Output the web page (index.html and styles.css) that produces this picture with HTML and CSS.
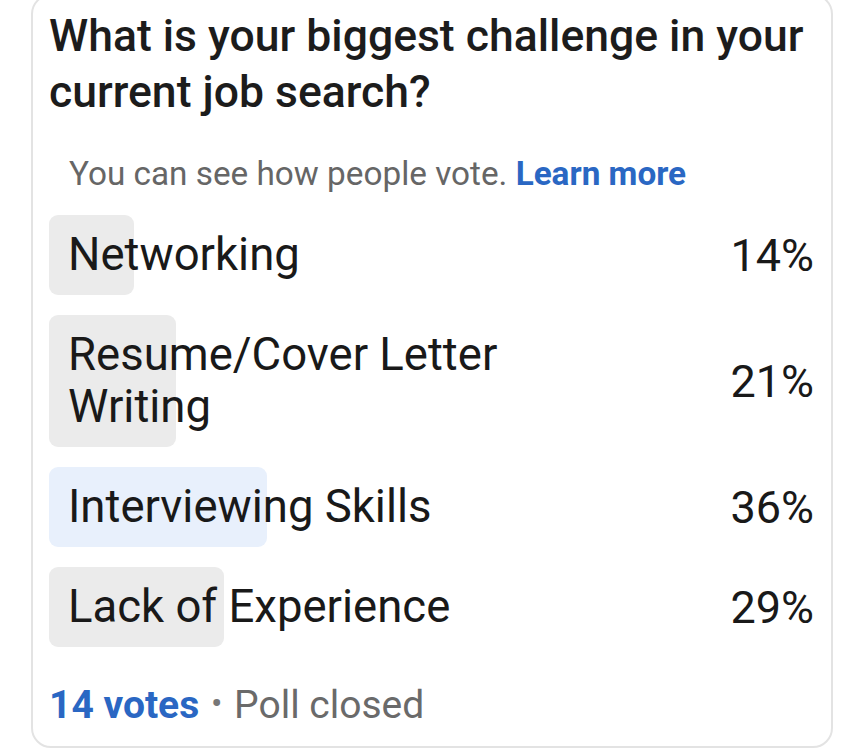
FILE: index.html
```html
<!DOCTYPE html>
<html>
<head>
    <title>Poll</title>
    <link rel="stylesheet" href="styles.css">
</head>
<body>
    <div class="poll-card">
        <h1 class="poll-question">What is your biggest challenge in your current job search?</h1>
        <p class="poll-note">You can see how people vote. <a href="#" class="link">Learn more</a></p>

        <div class="options">
            <div class="option">
                <div class="track"><div class="bar" style="width: 14%;"></div></div>
                <span class="label">Networking</span>
                <span class="pct">14%</span>
            </div>
            <div class="option">
                <div class="track"><div class="bar" style="width: 21%;"></div></div>
                <span class="label">Resume/Cover Letter Writing</span>
                <span class="pct">21%</span>
            </div>
            <div class="option chosen">
                <div class="track"><div class="bar" style="width: 36%;"></div></div>
                <span class="label">Interviewing Skills</span>
                <span class="pct">36%</span>
            </div>
            <div class="option">
                <div class="track"><div class="bar" style="width: 29%;"></div></div>
                <span class="label">Lack of Experience</span>
                <span class="pct">29%</span>
            </div>
        </div>

        <div class="poll-footer">
            <a href="#" class="votes">14 votes</a>
            <span class="dot">&bull;</span>
            <span class="status">Poll closed</span>
        </div>
    </div>
</body>
</html>
```

FILE: styles.css
```css
body {
    margin: 0;
    background: #fff;
    font-family: Roboto, 'Noto Sans', sans-serif;
    color: #191919;
}

.poll-card {
    width: 802px;
    box-sizing: border-box;
    margin: -6px 0 0 31px;
    padding: 12px 17px 17px 16px;
    border: 2px solid #e3e3e3;
    border-radius: 20px;
    background: #fff;
}

.poll-question {
    margin: 0;
    font-size: 44.5px;
    font-weight: 500;
    line-height: 56px;
    color: #1c1c1c;
}

.poll-note {
    margin: 31px 0 18px 20px;
    font-size: 33.3px;
    line-height: 46px;
    color: #666;
}

.link {
    color: #2a67c3;
    font-weight: 700;
    text-decoration: none;
}

.options {
    display: flex;
    flex-direction: column;
    gap: 20px;
}

.option {
    position: relative;
    display: flex;
    align-items: center;
    justify-content: space-between;
    min-height: 80px;
}

.track {
    position: absolute;
    top: 0;
    bottom: 0;
    left: 0;
    width: 605px;
}

.bar {
    height: 100%;
    background: #ebebeb;
    border-radius: 9px;
}

.chosen .bar {
    background: #e8f0fc;
}

.label {
    position: relative;
    width: 563px;
    padding: 14px 0 14px 19px;
    font-size: 45.5px;
    line-height: 52px;
}

.pct {
    position: relative;
    font-size: 45px;
}

.poll-footer {
    margin-top: 32px;
    font-size: 39px;
    line-height: 48px;
}

.votes {
    color: #2a67c3;
    font-weight: 700;
    text-decoration: none;
}

.dot {
    color: #777;
    font-size: 34px;
    vertical-align: 3px;
    margin: 0 2px;
}

.status {
    color: #6a6a6a;
}
```
